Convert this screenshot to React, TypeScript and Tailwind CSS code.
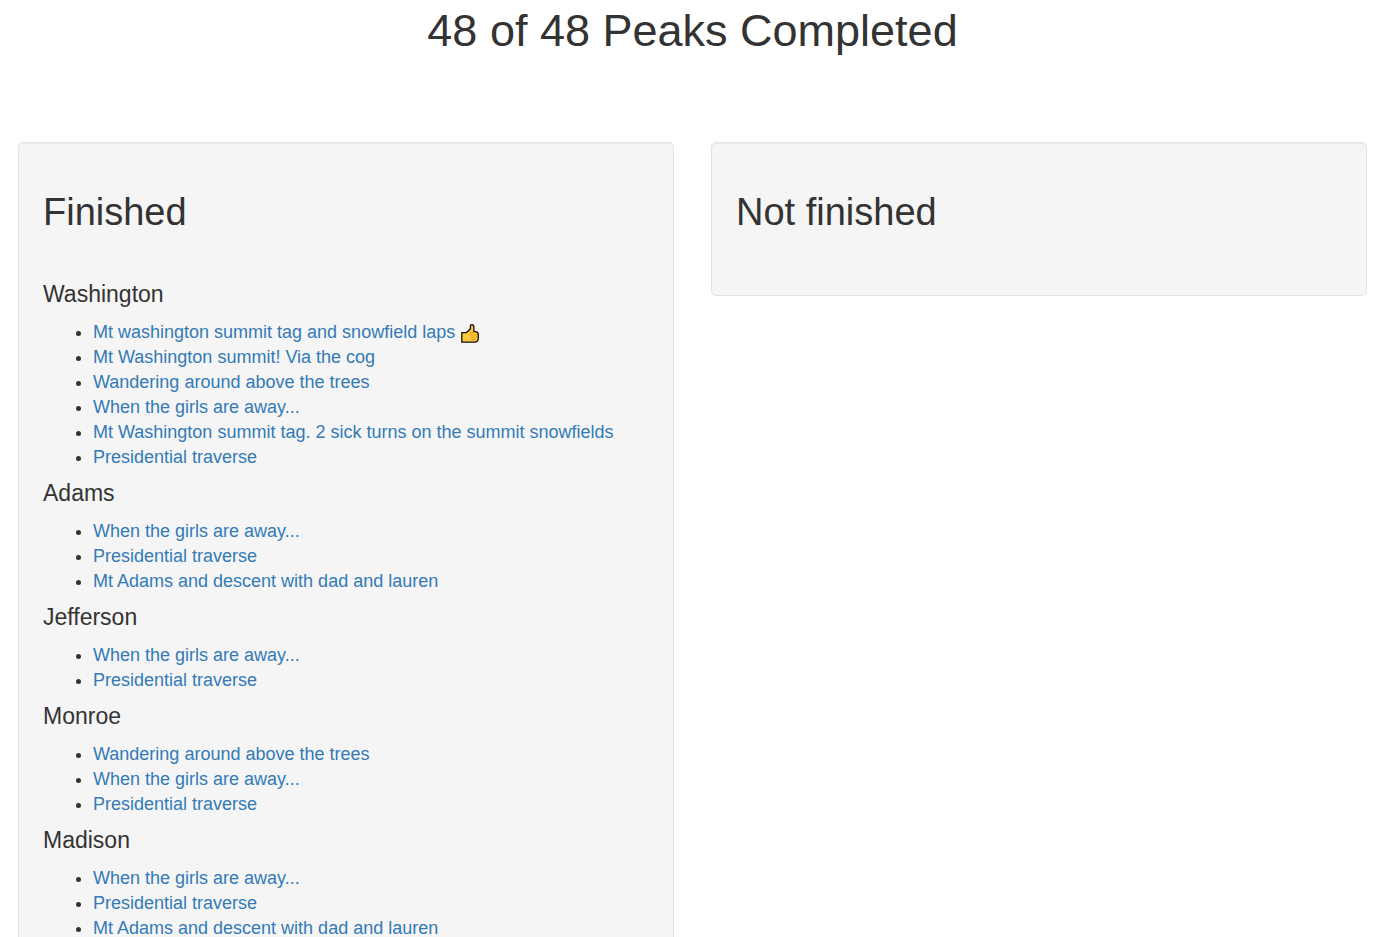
type Peak = { name: string; activities: string[] };

const finished: Peak[] = [
  {
    name: "Washington",
    activities: [
      "Mt washington summit tag and snowfield laps 👍",
      "Mt Washington summit! Via the cog",
      "Wandering around above the trees",
      "When the girls are away...",
      "Mt Washington summit tag. 2 sick turns on the summit snowfields",
      "Presidential traverse",
    ],
  },
  {
    name: "Adams",
    activities: [
      "When the girls are away...",
      "Presidential traverse",
      "Mt Adams and descent with dad and lauren",
    ],
  },
  { name: "Jefferson", activities: ["When the girls are away...", "Presidential traverse"] },
  {
    name: "Monroe",
    activities: [
      "Wandering around above the trees",
      "When the girls are away...",
      "Presidential traverse",
    ],
  },
  {
    name: "Madison",
    activities: [
      "When the girls are away...",
      "Presidential traverse",
      "Mt Adams and descent with dad and lauren",
    ],
  },
];

function ThumbsUp() {
  return (
    <svg
      role="img"
      aria-label="thumbs up"
      viewBox="0 0 18 19"
      className="ml-px inline-block h-[19px] w-[18px] align-[-5px]"
    >
      <path
        d="M.8 8.6h4.6L9.4 5V1.7C9.4.9 9.9.7 10.6.7c1.6 0 2.3 1 2.3 2.4v4.5h1.3c1.9 0 3.1 1.5 3.1 3.3v3.2c0 2.6-1.5 4.1-3.8 4.1H.8z"
        fill="#ffc83d"
        stroke="#111"
        strokeWidth="1.3"
        strokeLinejoin="round"
      />
      <path
        d="M9.4 8.6h3.6M9.8 11h6.4M9.8 13.3h6.4M9.8 15.6h5M9.4 8.6v2"
        fill="none"
        stroke="#e39d10"
        strokeWidth="0.9"
      />
    </svg>
  );
}

function Activity({ title }: { title: string }) {
  const hasThumb = title.endsWith("👍");
  return (
    <li className="h-[25px]">
      <a href="#" className="text-[#337ab7] hover:underline">
        {hasThumb ? title.replace("👍", "") : title}
        {hasThumb && <ThumbsUp />}
      </a>
    </li>
  );
}

function Panel({ title, peaks }: { title: string; peaks: Peak[] }) {
  return (
    <section className="flex flex-col rounded-[5px] border border-[#e3e3e3] bg-[#f5f5f5] p-6 shadow-[inset_0_1px_1px_rgba(0,0,0,0.05)]">
      <h2 className="mt-[25px] mb-[38px] text-[38px] leading-[41px]">{title}</h2>
      {peaks.length > 0 && (
        <div className="flex flex-col gap-[11px] py-[11px]">
          {peaks.map((peak) => (
            <div key={peak.name}>
              <h4 className="mb-[13px] text-[23px] leading-[25px]">{peak.name}</h4>
              <ul className="list-disc pl-[50px]">
                {peak.activities.map((activity) => (
                  <Activity key={activity} title={activity} />
                ))}
              </ul>
            </div>
          ))}
        </div>
      )}
    </section>
  );
}

export default function App() {
  return (
    <main className="bg-white pt-[6px] pr-4 pb-6 pl-[18px] font-['Liberation_Sans',Arial,sans-serif] text-[18px] leading-[25px] text-[#333]">
      <h1 className="mb-[86px] text-center text-[45px] leading-[50px]">48 of 48 Peaks Completed</h1>
      <div className="grid grid-cols-2 items-start gap-[37px]">
        <Panel title="Finished" peaks={finished} />
        <Panel title="Not finished" peaks={[]} />
      </div>
    </main>
  );
}
